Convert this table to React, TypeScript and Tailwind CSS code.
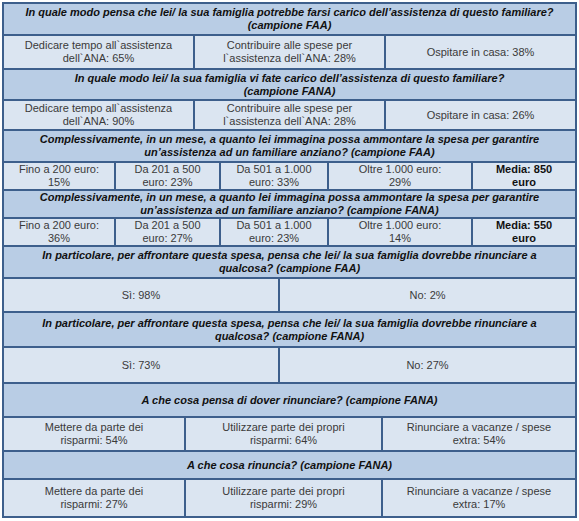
const font = { fontFamily: '"Liberation Sans", Arial, sans-serif' };

type Cell = { text: string[]; w: string; bold?: boolean };

function Header({ lines, h }: { lines: string[]; h: string }) {
  return (
    <div
      className={`${h} flex flex-col items-center justify-center bg-[#b9cde5] text-center text-[11px] font-bold italic leading-[13px] text-[#111]`}
    >
      {lines.map((l) => (
        <div key={l}>{l}</div>
      ))}
    </div>
  );
}

function DataRow({ cells, h }: { cells: Cell[]; h: string }) {
  return (
    <div className={`${h} flex gap-[2px]`}>
      {cells.map((c, i) => (
        <div
          key={i}
          className={`${c.w} flex flex-col items-center justify-center bg-[#dbe5f1] text-center text-[11px] leading-[13px] ${
            c.bold ? "font-bold text-[#111]" : "text-[#3a3a3a]"
          }`}
        >
          {c.text.map((t) => (
            <div key={t}>{t}</div>
          ))}
        </div>
      ))}
    </div>
  );
}

export default function App() {
  return (
    <div className="h-[521px] w-[579px] bg-white" style={font}>
      <div className="ml-[2px] pt-[2px]">
        <div className="flex w-[575px] flex-col gap-[2px] bg-[#3d5f8c] p-[2px]">
          <Header
            h="h-[30px]"
            lines={[
              "In quale modo pensa che lei/ la sua famiglia potrebbe farsi carico dell’assistenza di questo familiare?",
              "(campione FAA)",
            ]}
          />
          <DataRow
            h="h-[32px]"
            cells={[
              { w: "flex-1", text: ["Dedicare tempo all`assistenza", "dell`ANA: 65%"] },
              { w: "flex-1", text: ["Contribuire alle spese per", "l`assistenza dell`ANA: 28%"] },
              { w: "flex-1", text: ["Ospitare in casa: 38%"] },
            ]}
          />
          <Header
            h="h-[29px]"
            lines={[
              "In quale modo lei/ la sua famiglia vi fate carico dell’assistenza di questo familiare?",
              "(campione FANA)",
            ]}
          />
          <DataRow
            h="h-[28px]"
            cells={[
              { w: "flex-1", text: ["Dedicare tempo all`assistenza", "dell`ANA: 90%"] },
              { w: "flex-1", text: ["Contribuire alle spese per", "l`assistenza dell`ANA: 28%"] },
              { w: "flex-1", text: ["Ospitare in casa: 26%"] },
            ]}
          />
          <Header
            h="h-[30px]"
            lines={[
              "Complessivamente, in un mese, a quanto lei immagina possa ammontare la spesa per garantire",
              "un’assistenza ad un familiare anziano? (campione FAA)",
            ]}
          />
          <DataRow
            h="h-[26px]"
            cells={[
              { w: "w-[110px]", text: ["Fino a 200 euro:", "15%"] },
              { w: "w-[103px]", text: ["Da 201 a 500", "euro: 23%"] },
              { w: "w-[106px]", text: ["Da 501 a 1.000", "euro: 33%"] },
              { w: "w-[142px]", text: ["Oltre 1.000 euro:", "29%"] },
              { w: "flex-1", bold: true, text: ["Media: 850", "euro"] },
            ]}
          />
          <Header
            h="h-[26px]"
            lines={[
              "Complessivamente, in un mese, a quanto lei immagina possa ammontare la spesa per garantire",
              "un’assistenza ad un familiare anziano? (campione FANA)",
            ]}
          />
          <DataRow
            h="h-[26px]"
            cells={[
              { w: "w-[110px]", text: ["Fino a 200 euro:", "36%"] },
              { w: "w-[103px]", text: ["Da 201 a 500", "euro: 27%"] },
              { w: "w-[106px]", text: ["Da 501 a 1.000", "euro: 23%"] },
              { w: "w-[142px]", text: ["Oltre 1.000 euro:", "14%"] },
              { w: "flex-1", bold: true, text: ["Media: 550", "euro"] },
            ]}
          />
          <Header
            h="h-[30px]"
            lines={[
              "In particolare, per affrontare questa spesa, pensa che lei/ la sua famiglia dovrebbe rinunciare a",
              "qualcosa? (campione FAA)",
            ]}
          />
          <DataRow
            h="h-[32px]"
            cells={[
              { w: "w-[274px]", text: ["Sì: 98%"] },
              { w: "flex-1", text: ["No: 2%"] },
            ]}
          />
          <Header
            h="h-[33px]"
            lines={[
              "In particolare, per affrontare questa spesa, pensa che lei/ la sua famiglia dovrebbe rinunciare a",
              "qualcosa? (campione FANA)",
            ]}
          />
          <DataRow
            h="h-[34px]"
            cells={[
              { w: "w-[274px]", text: ["Sì: 73%"] },
              { w: "flex-1", text: ["No: 27%"] },
            ]}
          />
          <Header h="h-[32px]" lines={["A che cosa pensa di dover rinunciare? (campione FANA)"]} />
          <DataRow
            h="h-[32px]"
            cells={[
              { w: "w-[180px]", text: ["Mettere da parte dei", "risparmi: 54%"] },
              { w: "w-[195px]", text: ["Utilizzare parte dei propri", "risparmi: 64%"] },
              { w: "flex-1", text: ["Rinunciare a vacanze / spese", "extra: 54%"] },
            ]}
          />
          <Header h="h-[26px]" lines={["A che cosa rinuncia? (campione FANA)"]} />
          <DataRow
            h="h-[36px]"
            cells={[
              { w: "w-[180px]", text: ["Mettere da parte dei", "risparmi: 27%"] },
              { w: "w-[195px]", text: ["Utilizzare parte dei propri", "risparmi: 29%"] },
              { w: "flex-1", text: ["Rinunciare a vacanze / spese", "extra: 17%"] },
            ]}
          />
        </div>
      </div>
    </div>
  );
}
